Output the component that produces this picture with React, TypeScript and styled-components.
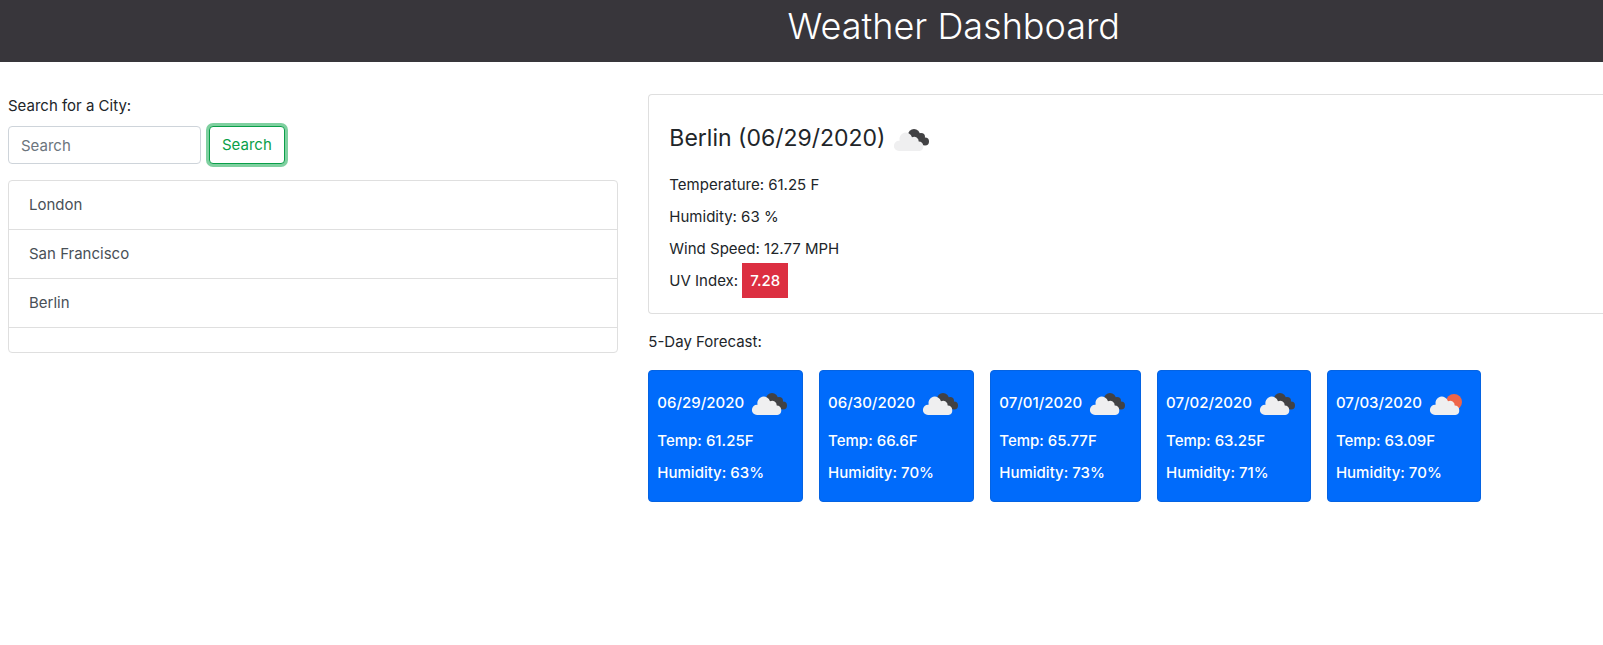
import React from "react";
import styled, { createGlobalStyle } from "styled-components";

const GlobalStyle = createGlobalStyle`
  *, *::before, *::after { box-sizing: border-box; }
  body {
    margin: 0;
    background: #ffffff;
    color: #212529;
    font-family: Inter, "Liberation Sans", sans-serif;
    font-size: 15px;
    line-height: 24px;
    overflow-x: hidden;
  }
`;

const Header = styled.header`
  padding: 2px 0 12px 19%;
  background: #38363b;
`;

const Title = styled.h1`
  margin: 0;
  color: #ffffff;
  font-size: 36px;
  font-weight: 300;
  line-height: 48px;
  text-align: center;
`;

const Layout = styled.main`
  display: grid;
  grid-template-columns: 39fr 61fr;
  column-gap: 30px;
  padding: 32px 0 32px 8px;
`;

const Panel = styled.section`
  min-width: 0;
`;

const SearchForm = styled.form`
  display: flex;
  flex-wrap: wrap;
  gap: 8px;
  margin-bottom: 16px;
`;

const SearchLabel = styled.label`
  flex: 0 0 100%;
`;

const SearchInput = styled.input`
  width: 193px;
  height: 38px;
  padding: 6px 12px;
  border: 1px solid #ced4da;
  border-radius: 4px;
  background: #ffffff;
  color: #495057;
  font: inherit;
  &::placeholder { color: #6c757d; opacity: 1; }
`;

const SearchButton = styled.button`
  height: 38px;
  padding: 6px 12px;
  border: 1px solid #0a9f49;
  border-radius: 4px;
  background: #ffffff;
  box-shadow: 0 0 0 3px #7fd0a0;
  color: #0a9f49;
  font: inherit;
  cursor: pointer;
`;

const CityList = styled.ul`
  margin: 0;
  padding: 0;
  list-style: none;
  border: 1px solid #dfdfdf;
  border-radius: 4px;
`;

const CityItem = styled.li`
  min-height: 25px;
  & + & { border-top: 1px solid #dfdfdf; }
`;

const CityButton = styled.button`
  display: block;
  width: 100%;
  padding: 12px 20px;
  border: 0;
  background: transparent;
  color: #495057;
  font: inherit;
  text-align: left;
  cursor: pointer;
`;

const CurrentCard = styled.article`
  padding: 20px;
  border: 1px solid #dfdfdf;
  border-right: 0;
  border-radius: 4px 0 0 4px;
`;

const CurrentTitle = styled.h2`
  margin: 0 0 8px;
  font-size: 23px;
  font-weight: 400;
  line-height: 28px;
`;

const Line = styled.p<{ $last?: boolean }>`
  margin: 0 0 ${(p) => (p.$last ? 0 : 8)}px;
`;

const UvBadge = styled.span`
  padding: 8px;
  background: #dc2f41;
  color: #ffffff;
  font-weight: 500;
`;

const ForecastHeading = styled.p`
  margin: 16px 0;
`;

const ForecastRow = styled.div`
  display: flex;
  flex-wrap: wrap;
  gap: 16px;
`;

const ForecastCard = styled.article`
  padding: 8px;
  border: 1px solid #0563e2;
  border-radius: 4px;
  background: #006bfb;
  color: #ffffff;
  font-weight: 500;
`;

const ForecastDate = styled.div`
  white-space: nowrap;
`;

const IconSvg = styled.svg`
  width: 50px;
  height: 50px;
  vertical-align: middle;
`;

type Sky = "clouds" | "sun";

const SkyIcon = ({ sky }: { sky: Sky }) => (
  <IconSvg viewBox="0 0 50 50" aria-hidden="true">
    {sky === "sun" ? (
      <circle cx="32" cy="23" r="8" fill="#ee6548" />
    ) : (
      <g fill="#424244">
        <circle cx="28" cy="20" r="6" />
        <circle cx="35" cy="22" r="4" />
        <circle cx="39" cy="26.5" r="4" />
        <path d="M28 18L35 20L39 30L30 30Z" />
      </g>
    )}
    <path
      fill="#efeff0"
      d="M13 36A5.1 5.1 0 0 1 13 25.8H13.6A6.4 6.4 0 0 1 26 22.3A4.5 4.5 0 0 1 32.7 26.5A4.8 4.8 0 0 1 33.4 36Z"
    />
  </IconSvg>
);

const cities = ["London", "San Francisco", "Berlin", ""];

const forecast: { date: string; temp: string; humidity: string; sky: Sky }[] = [
  { date: "06/29/2020", temp: "61.25F", humidity: "63%", sky: "clouds" },
  { date: "06/30/2020", temp: "66.6F", humidity: "70%", sky: "clouds" },
  { date: "07/01/2020", temp: "65.77F", humidity: "73%", sky: "clouds" },
  { date: "07/02/2020", temp: "63.25F", humidity: "71%", sky: "clouds" },
  { date: "07/03/2020", temp: "63.09F", humidity: "70%", sky: "sun" },
];

export default function App() {
  return (
    <>
      <GlobalStyle />
      <Header>
        <Title>Weather Dashboard</Title>
      </Header>
      <Layout>
        <Panel>
          <SearchForm onSubmit={(e) => e.preventDefault()}>
            <SearchLabel htmlFor="city">Search for a City:</SearchLabel>
            <SearchInput id="city" type="text" placeholder="Search" />
            <SearchButton type="submit">Search</SearchButton>
          </SearchForm>
          <CityList>
            {cities.map((city, i) => (
              <CityItem key={i}>
                {city && <CityButton type="button">{city}</CityButton>}
              </CityItem>
            ))}
          </CityList>
        </Panel>
        <Panel>
          <CurrentCard>
            <CurrentTitle>
              Berlin (06/29/2020)
              <SkyIcon sky="clouds" />
            </CurrentTitle>
            <Line>Temperature: 61.25 F</Line>
            <Line>Humidity: 63 %</Line>
            <Line>Wind Speed: 12.77 MPH</Line>
            <Line $last>
              UV Index: <UvBadge>7.28</UvBadge>
            </Line>
          </CurrentCard>
          <ForecastHeading>5-Day Forecast:</ForecastHeading>
          <ForecastRow>
            {forecast.map((day) => (
              <ForecastCard key={day.date}>
                <ForecastDate>
                  {day.date}
                  <SkyIcon sky={day.sky} />
                </ForecastDate>
                <Line>Temp: {day.temp}</Line>
                <Line>Humidity: {day.humidity}</Line>
              </ForecastCard>
            ))}
          </ForecastRow>
        </Panel>
      </Layout>
    </>
  );
}
